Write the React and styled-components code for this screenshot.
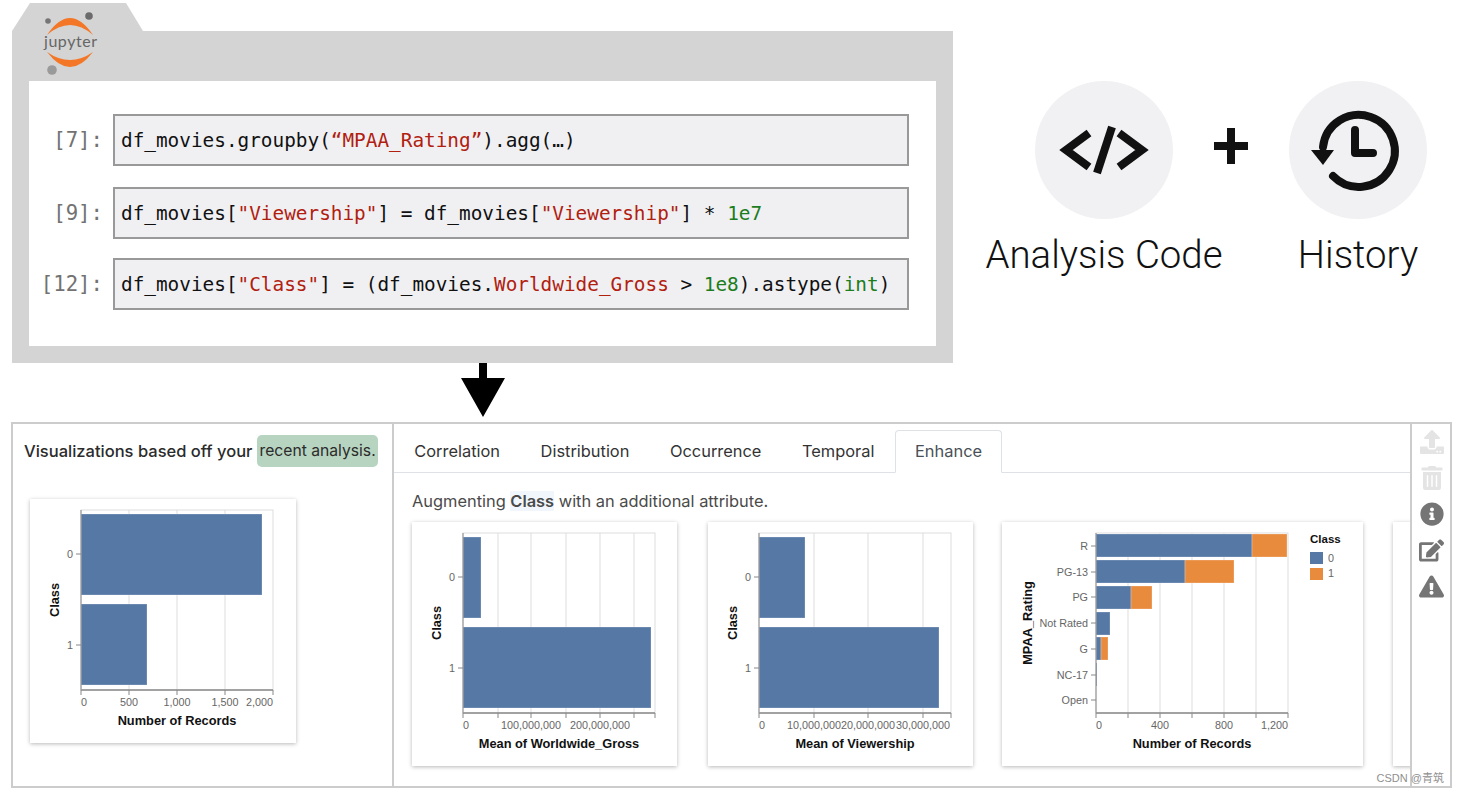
import React from "react";
import styled, { createGlobalStyle } from "styled-components";
import {
  FaUpload,
  FaTrashAlt,
  FaInfoCircle,
  FaEdit,
  FaExclamationTriangle,
} from "react-icons/fa";

const GlobalStyle = createGlobalStyle`
  html, body {
    margin: 0;
    padding: 0;
    background: #fff;
    font-family: Inter, "Liberation Sans", sans-serif;
  }
`;

const Page = styled.div`
  position: relative;
  width: 1459px;
  height: 793px;
  overflow: hidden;
  background: #fff;
`;

const TopRow = styled.div`
  display: flex;
  align-items: flex-start;
  padding: 3px 0 0 12px;
`;

const Notebook = styled.div`
  position: relative;
  width: 941px;
`;

const FolderTab = styled.div`
  width: 131px;
  height: 28px;
  background: #d4d4d4;
  clip-path: polygon(0 100%, 18px 0, 114px 0, 100% 100%);
`;

const NotebookHeader = styled.div`
  height: 50px;
  background: #d4d4d4;
`;

const LogoSlot = styled.div`
  position: absolute;
  left: 24px;
  top: 7px;
`;

const NotebookBody = styled.div`
  background: #d4d4d4;
  padding: 0 17px 17px;
`;

const CellList = styled.div`
  height: 265px;
  box-sizing: border-box;
  background: #fff;
  padding-top: 33px;
`;

const CellRow = styled.div`
  display: flex;
  align-items: center;
  margin-bottom: ${(p) => p.$gap}px;
`;

const Prompt = styled.div`
  width: 74px;
  flex: none;
  text-align: right;
  color: #727272;
  font: 20.7px "DejaVu Sans Mono", monospace;
`;

const CodeBox = styled.div`
  width: 796px;
  height: 52px;
  margin-left: 10px;
  box-sizing: border-box;
  border: 2px solid #999;
  background: #f0f0f3;
  padding-left: 6px;
  color: #111;
  font: 19.36px/50px "DejaVu Sans Mono", monospace;
  white-space: pre;
`;

const Str = styled.span`
  color: #b1200f;
`;

const Num = styled.span`
  color: #1c7d1c;
`;

const FeatureRow = styled.div`
  display: flex;
  margin: 78px 0 0 82px;
`;

const Feature = styled.div`
  width: 138px;
  display: flex;
  flex-direction: column;
  align-items: center;
`;

const Circle = styled.div`
  width: 138px;
  height: 138px;
  border-radius: 50%;
  background: #f1f1f3;
`;

const FeatureLabel = styled.div`
  margin-top: 13px;
  color: #111;
  font: 300 38.4px/46px Roboto, sans-serif;
  white-space: nowrap;
`;

const PlusSlot = styled.div`
  width: 116px;
  height: 130px;
  display: flex;
  align-items: center;
  justify-content: center;
`;

const ArrowRow = styled.div`
  padding-left: 461px;
  height: 59px;
  svg {
    display: block;
  }
`;

const Panel = styled.div`
  display: flex;
  width: 1441px;
  height: 366px;
  margin-left: 11px;
  box-sizing: border-box;
  border: 2px solid #ccc;
`;

const LeftPane = styled.div`
  width: 381px;
  flex: none;
  box-sizing: border-box;
  padding: 11px 0 0 11px;
  border-right: 2px solid #ccc;
`;

const PaneTitle = styled.div`
  display: flex;
  align-items: center;
  gap: 5px;
  margin-bottom: 32px;
  color: #2b2b2b;
  font-size: 16.5px;
  font-weight: 500;
`;

const Pill = styled.span`
  display: inline-block;
  height: 32px;
  padding: 0 2px;
  border-radius: 5px;
  background: #b7d4c0;
  font-size: 15.7px;
  font-weight: 400;
  line-height: 32px;
`;

const MainPane = styled.div`
  flex: 1;
  min-width: 0;
  overflow: hidden;
`;

const TabBar = styled.div`
  display: flex;
  height: 42px;
  margin-top: 6px;
  border-bottom: 1px solid #dee2e6;
`;

const Tab = styled.div`
  height: 43px;
  box-sizing: border-box;
  padding: 0 19.3px;
  border: 1px solid ${(p) => (p.$active ? "#dee2e6" : "transparent")};
  border-bottom-color: ${(p) => (p.$active ? "#fff" : "transparent")};
  border-radius: 4px 4px 0 0;
  background: ${(p) => (p.$active ? "#fff" : "transparent")};
  color: ${(p) => (p.$active ? "#495057" : "#333")};
  font-size: 16.4px;
  line-height: 41px;
`;

const Message = styled.div`
  height: 49px;
  box-sizing: border-box;
  padding: 17px 0 0 18px;
  color: #4a4a4a;
  font-size: 16.4px;
  line-height: 22px;
`;

const Mark = styled.span`
  background: #f0f6fc;
  font-weight: 600;
`;

const CardRow = styled.div`
  display: flex;
  padding-left: 18px;
`;

const Card = styled.div`
  flex: none;
  width: ${(p) => p.$w}px;
  height: 244px;
  margin-left: ${(p) => p.$indent || 0}px;
  background: #fff;
  box-shadow: 0 1px 4px rgba(0, 0, 0, 0.28);
  svg {
    display: block;
  }
`;

const Rail = styled.div`
  width: 40px;
  flex: none;
  box-sizing: border-box;
  padding: 6px 0 0 6px;
  display: flex;
  flex-direction: column;
  gap: 12px;
  border-left: 2px solid #ccc;
  background: #fff;
`;

const RailIcon = styled.div`
  width: 27px;
  height: 24px;
  display: flex;
  align-items: center;
  justify-content: center;
  color: ${(p) => (p.$off ? "#e4e4e4" : "#757575")};
  font-size: ${(p) => p.$size || 24}px;
`;

const Watermark = styled.div`
  position: absolute;
  right: 15px;
  bottom: 8px;
  color: #8f8f8f;
  font: 11px "Liberation Sans", "Noto Sans CJK SC", sans-serif;
`;

const Tick = styled.text`
  fill: #666;
  font: 10.8px "Liberation Sans", sans-serif;
`;

const AxisTitle = styled.text`
  fill: #111;
  font: bold 12.8px "Liberation Sans", sans-serif;
`;

const LegendTitle = styled(AxisTitle)`
  font-size: 11.5px;
`;

const BLUE = "#5678a5";
const ORANGE = "#e98b3c";

const JupyterLogo = () => (
  <svg width="64" height="70" viewBox="0 0 64 70">
    <circle cx="12" cy="11" r="2.8" fill="#757575" />
    <circle cx="53" cy="6" r="3.8" fill="#6b6b6b" />
    <circle cx="16" cy="60" r="4.8" fill="#9a9a9a" />
    <path d="M11 25 Q34 -9 57 25 Q34 5 11 25 Z" fill="#f37726" />
    <path d="M11 42 Q34 72 57 42 Q34 58 11 42 Z" fill="#f37726" />
    <text x="8" y="37" fill="#666" fontFamily="Lato, sans-serif" fontSize="16" textLength="53">
      jupyter
    </text>
  </svg>
);

const CodeIcon = () => (
  <svg width="138" height="138" viewBox="0 0 138 138" fill="none" stroke="#111" strokeWidth="8">
    <path d="M54 52 L31 69 L54 86" />
    <path d="M84 52 L107 69 L84 86" />
    <path d="M77 46 L62 92" />
  </svg>
);

const HistoryIcon = () => (
  <svg width="138" height="138" viewBox="-69 -69 138 138" fill="none" stroke="#111" strokeWidth="8" strokeLinecap="round">
    <path d="M-35 -3 A36 36 0 1 1 -25 26" />
    <path d="M-47 0 L-24 0 L-35 15 Z" fill="#111" stroke="none" />
    <path d="M-3 -20 L-3 3 L15 3" strokeLinejoin="round" />
  </svg>
);

const PlusIcon = () => (
  <svg width="34" height="36" viewBox="0 0 34 36">
    <path d="M13 0 H21 V14 H34 V22 H21 V36 H13 V22 H0 V14 H13 Z" fill="#111" />
  </svg>
);

// plot box is the same 192x180 in every chart, only the left edge moves
const Chart = ({ w, plotX = 51, grid, xLabels, yLabels, bars, xTitle, yTitle, yTitleX = 25, children }) => {
  const top = 11;
  const bottom = 191;
  const right = plotX + 192;
  return (
    <svg width={w} height="244" viewBox={`0 0 ${w} 244`}>
      <rect x={plotX} y={top} width="192" height="180" fill="none" stroke="#ddd" />
      {grid.map((g) => (
        <line key={g} x1={plotX + g} x2={plotX + g} y1={top} y2={bottom} stroke="#ddd" />
      ))}
      {bars.map((b, i) => (
        <rect
          key={i}
          x={plotX + b.x}
          y={b.y}
          width={b.w}
          height={b.h}
          fill={b.color || BLUE}
          stroke="#fff"
          strokeOpacity="0.25"
        />
      ))}
      <line x1={plotX} x2={right} y1={bottom} y2={bottom} stroke="#888" strokeWidth="1.4" />
      <line x1={plotX} x2={plotX} y1={top} y2={bottom} stroke="#999" strokeWidth="1.2" />
      {[0, ...grid, 192].map((g) => (
        <line key={g} x1={plotX + g} x2={plotX + g} y1={bottom} y2={bottom + 5} stroke="#888" />
      ))}
      {xLabels.map((l) => (
        <Tick key={l.t} x={plotX + l.x} y={bottom + 16} textAnchor={l.a || "middle"}>
          {l.t}
        </Tick>
      ))}
      {yLabels.map((l) => (
        <g key={l.t}>
          <line x1={plotX - 5} x2={plotX} y1={l.y} y2={l.y} stroke="#888" />
          <Tick x={plotX - 8} y={l.y + 4} textAnchor="end">
            {l.t}
          </Tick>
        </g>
      ))}
      <AxisTitle x={plotX + 96} y={226} textAnchor="middle">
        {xTitle}
      </AxisTitle>
      <AxisTitle transform={`translate(${yTitleX + 4} 101) rotate(-90)`} textAnchor="middle">
        {yTitle}
      </AxisTitle>
      {children}
    </svg>
  );
};

const classLabels = [
  { t: "0", y: 55 },
  { t: "1", y: 146 },
];

const ratingLabels = ["R", "PG-13", "PG", "Not Rated", "G", "NC-17", "Open"].map((t, i) => ({
  t,
  y: Math.round(24 + i * 25.7),
}));

const ratingBars = [
  { y: 12, blue: 156, orange: 35 },
  { y: 38, blue: 89, orange: 49 },
  { y: 64, blue: 35, orange: 21 },
  { y: 90, blue: 14, orange: 0 },
  { y: 115, blue: 5, orange: 7 },
  { y: 141, blue: 1, orange: 0 },
].flatMap((r) => [
  { x: 0, y: r.y, w: r.blue, h: 23 },
  ...(r.orange ? [{ x: r.blue, y: r.y, w: r.orange, h: 23, color: ORANGE }] : []),
]);

const App = () => {
  return (
    <Page>
      <GlobalStyle />
      <TopRow>
        <Notebook>
          <FolderTab />
          <NotebookHeader />
          <LogoSlot>
            <JupyterLogo />
          </LogoSlot>
          <NotebookBody>
            <CellList>
              <CellRow $gap={21}>
                <Prompt>[7]:</Prompt>
                <CodeBox>
                  df_movies.groupby(<Str>“MPAA_Rating”</Str>).agg(…)
                </CodeBox>
              </CellRow>
              <CellRow $gap={19}>
                <Prompt>[9]:</Prompt>
                <CodeBox>
                  df_movies[<Str>"Viewership"</Str>] = df_movies[<Str>"Viewership"</Str>] * <Num>1e7</Num>
                </CodeBox>
              </CellRow>
              <CellRow $gap={0}>
                <Prompt>[12]:</Prompt>
                <CodeBox>
                  df_movies[<Str>"Class"</Str>] = (df_movies.<Str>Worldwide_Gross</Str> &gt; <Num>1e8</Num>).astype(<Num>int</Num>)
                </CodeBox>
              </CellRow>
            </CellList>
          </NotebookBody>
        </Notebook>
        <FeatureRow>
          <Feature>
            <Circle>
              <CodeIcon />
            </Circle>
            <FeatureLabel>Analysis Code</FeatureLabel>
          </Feature>
          <PlusSlot>
            <PlusIcon />
          </PlusSlot>
          <Feature>
            <Circle>
              <HistoryIcon />
            </Circle>
            <FeatureLabel>History</FeatureLabel>
          </Feature>
        </FeatureRow>
      </TopRow>
      <ArrowRow>
        <svg width="44" height="54" viewBox="0 0 44 54">
          <path d="M18 0 H26 V15 H44 L22 54 L0 15 H18 Z" fill="#000" />
        </svg>
      </ArrowRow>
      <Panel>
        <LeftPane>
          <PaneTitle>
            Visualizations based off your <Pill>recent analysis.</Pill>
          </PaneTitle>
          <Card $w={266} $indent={6}>
            <Chart
              w={266}
              grid={[48, 96, 144]}
              xLabels={[
                { t: "0", x: 0, a: "start" },
                { t: "500", x: 48 },
                { t: "1,000", x: 96 },
                { t: "1,500", x: 144 },
                { t: "2,000", x: 192, a: "end" },
              ]}
              yLabels={classLabels}
              bars={[
                { x: 0, y: 15, w: 181, h: 81 },
                { x: 0, y: 105, w: 66, h: 81 },
              ]}
              xTitle="Number of Records"
              yTitle="Class"
            />
          </Card>
        </LeftPane>
        <MainPane>
          <TabBar>
            <Tab>Correlation</Tab>
            <Tab>Distribution</Tab>
            <Tab>Occurrence</Tab>
            <Tab>Temporal</Tab>
            <Tab $active>Enhance</Tab>
          </TabBar>
          <Message>
            Augmenting <Mark>Class</Mark> with an additional attribute.
          </Message>
          <CardRow>
            <Card $w={265}>
              <Chart
                w={265}
                grid={[35, 68, 103, 137, 171]}
                xLabels={[
                  { t: "0", x: 0, a: "start" },
                  { t: "100,000,000", x: 68 },
                  { t: "200,000,000", x: 137 },
                ]}
                yLabels={classLabels}
                bars={[
                  { x: 0, y: 15, w: 18, h: 81 },
                  { x: 0, y: 105, w: 188, h: 81 },
                ]}
                xTitle="Mean of Worldwide_Gross"
                yTitle="Class"
              />
            </Card>
            <Card $w={265} $indent={31}>
              <Chart
                w={265}
                grid={[55, 109, 164]}
                xLabels={[
                  { t: "0", x: 0, a: "start" },
                  { t: "10,000,000", x: 55 },
                  { t: "20,000,000", x: 109 },
                  { t: "30,000,000", x: 164 },
                ]}
                yLabels={classLabels}
                bars={[
                  { x: 0, y: 15, w: 46, h: 81 },
                  { x: 0, y: 105, w: 180, h: 81 },
                ]}
                xTitle="Mean of Viewership"
                yTitle="Class"
              />
            </Card>
            <Card $w={361} $indent={29}>
              <Chart
                w={361}
                plotX={94}
                grid={[32, 64, 96, 128, 160]}
                xLabels={[
                  { t: "0", x: 0, a: "start" },
                  { t: "400", x: 64 },
                  { t: "800", x: 128 },
                  { t: "1,200", x: 192, a: "end" },
                ]}
                yLabels={ratingLabels}
                bars={ratingBars}
                xTitle="Number of Records"
                yTitle="MPAA_Rating"
                yTitleX={26}
              >
                <LegendTitle x="308" y="21">
                  Class
                </LegendTitle>
                <rect x="308" y="30" width="13" height="12" fill={BLUE} />
                <rect x="308" y="46" width="13" height="12" fill={ORANGE} />
                <Tick x="326" y="40">
                  0
                </Tick>
                <Tick x="326" y="55">
                  1
                </Tick>
              </Chart>
            </Card>
            <Card $w={266} $indent={30} />
          </CardRow>
        </MainPane>
        <Rail>
          <RailIcon $off>
            <FaUpload />
          </RailIcon>
          <RailIcon $off>
            <FaTrashAlt />
          </RailIcon>
          <RailIcon>
            <FaInfoCircle />
          </RailIcon>
          <RailIcon $size={25}>
            <FaEdit />
          </RailIcon>
          <RailIcon $size={25}>
            <FaExclamationTriangle />
          </RailIcon>
        </Rail>
      </Panel>
      <Watermark>CSDN @青筑</Watermark>
    </Page>
  );
};

export default App;
